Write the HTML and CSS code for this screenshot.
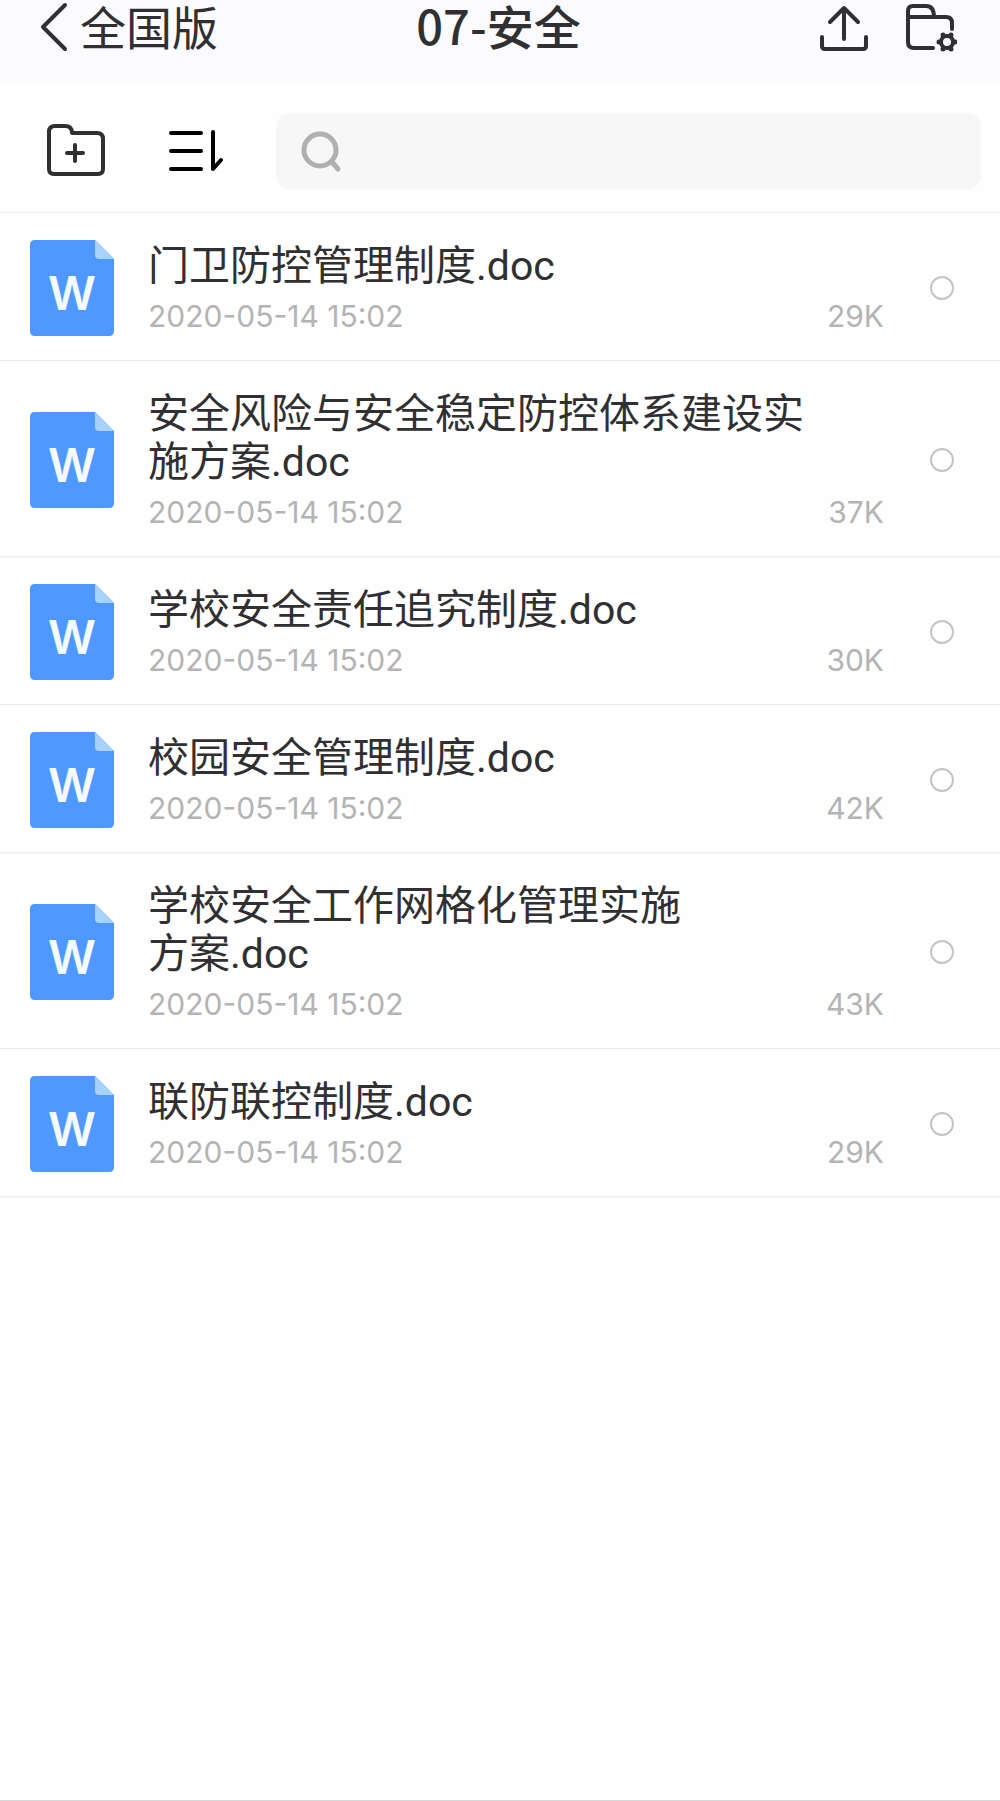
FILE: index.html
```html
<!DOCTYPE html>
<html lang="zh-CN">
<head>
  <meta charset="UTF-8" />
  <meta name="viewport" content="width=device-width, initial-scale=1.0"/>
  <title>07-安全</title>
  <link rel="stylesheet" href="styles.css">
</head>
<body>
  <header class="header">
    <a class="back" href="#">
      <svg width="28" height="50" viewBox="0 0 28 50"><path d="M25 3L3 25l22 22"/></svg>
      <span>全国版</span>
    </a>
    <h1>07-安全</h1>
    <div class="actions">
      <button type="button" aria-label="上传">
        <svg width="50" height="48" viewBox="0 0 50 48"><path d="M25 35V4M11 18L25 4l14 14M3 33v9q0 3 3 3h38q3 0 3-3v-9"/></svg>
      </button>
      <button type="button" aria-label="文件夹设置">
        <svg width="52" height="50" viewBox="0 0 52 50">
          <path d="M28 45H9q-6 0-6-6V8q0-5 5-5h13q8 0 8 11M3 14h38q6 0 6 6v6"/>
          <circle cx="42" cy="39" r="6"/>
          <path class="gear-teeth" d="M38 32v0M46 32v0M50 39v0M46 46v0M38 46v0M34 39v0"/>
        </svg>
      </button>
    </div>
  </header>

  <div class="toolbar">
    <button type="button" aria-label="新建文件夹">
      <svg width="60" height="54" viewBox="0 0 60 54"><path d="M3 8q0-6 6-6h10q7 0 7 7h25q6 0 6 6v30q0 5-5 5H8q-5 0-5-5zM21 29h16M29 21v16"/></svg>
    </button>
    <button type="button" class="sort" aria-label="排序">
      <svg width="56" height="44" viewBox="0 0 56 44"><path d="M3 4h30M3 22h30M3 40h30M45 3v37l8-9"/></svg>
    </button>
    <label class="search">
      <svg width="44" height="44" viewBox="0 0 44 44"><circle cx="21" cy="21" r="16"/><path d="M33 33l6 7"/></svg>
      <input type="search" aria-label="搜索">
    </label>
  </div>

  <ul class="files" id="fileList"></ul>

  <script>
    const fileList = document.getElementById("fileList");
    const files = [
      { name: "门卫防控管理制度.doc", date: "2020-05-14 15:02", size: "29K" },
      { name: "安全风险与安全稳定防控体系建设实施方案.doc", date: "2020-05-14 15:02", size: "37K" },
      { name: "学校安全责任追究制度.doc", date: "2020-05-14 15:02", size: "30K" },
      { name: "校园安全管理制度.doc", date: "2020-05-14 15:02", size: "42K" },
      { name: "学校安全工作网格化管理实施<br>方案.doc", date: "2020-05-14 15:02", size: "43K" },
      { name: "联防联控制度.doc", date: "2020-05-14 15:02", size: "29K" }
    ];

    files.forEach((file, index) => {
      const li = document.createElement("li");
      li.className = "file";
      li.innerHTML = `
        <svg class="doc-icon" width="84" height="96" viewBox="0 0 84 96">
          <path fill="#4e98ff" d="M5 0h60l19 19v72q0 5-5 5H5q-5 0-5-5V5q0-5 5-5z"/>
          <path fill="#a5d3fb" d="M65 0l19 19H69q-4 0-4-4z"/>
          <text x="42" y="70" text-anchor="middle">W</text>
        </svg>
        <label class="info" for="file${index}">
          <span class="name">${file.name}</span>
          <span class="meta"><span>${file.date}</span><span>${file.size}</span></span>
        </label>
        <input type="radio" name="file" id="file${index}">
      `;
      fileList.appendChild(li);
    });
  </script>
</body>
</html>
```

FILE: styles.css
```css
* {
  box-sizing: border-box;
}

body {
  margin: 0;
  min-height: 100vh;
  font-family: Inter, "Noto Sans CJK SC", sans-serif;
  background: #fefefe;
  color: #303033;
  border-bottom: 1px solid #d8d8d8;
}

button {
  display: flex;
  padding: 0;
  border: none;
  background: none;
  color: inherit;
  cursor: pointer;
}

svg {
  display: block;
  flex: none;
  fill: none;
  stroke: currentColor;
  stroke-width: 4;
  stroke-linecap: round;
  stroke-linejoin: round;
}

.header {
  display: grid;
  grid-template-columns: 1fr auto 1fr;
  align-items: start;
  height: 84px;
  padding: 0 43px 0 40px;
  background: #fbfbfe;
  font-family: "Noto Sans CJK SC", sans-serif;
}

.back {
  display: flex;
  align-items: flex-start;
  gap: 12px;
  color: inherit;
  font-size: 46px;
  line-height: 50px;
  text-decoration: none;
}

.back svg {
  margin-top: 2px;
}

.header h1 {
  margin: 0;
  font-size: 47px;
  line-height: 50px;
  font-weight: 500;
}

.actions {
  display: flex;
  justify-content: flex-end;
  align-items: center;
  gap: 36px;
  padding-top: 3px;
}

.gear-teeth {
  stroke-width: 5;
}

.toolbar {
  display: flex;
  align-items: center;
  height: 129px;
  padding: 6px 19px 0 46px;
  border-bottom: 1px solid #ededed;
}

.sort {
  margin: 0 52px 0 62px;
  color: #000;
}

.search {
  display: flex;
  flex: 1;
  align-items: center;
  height: 76px;
  padding: 0 23px;
  border-radius: 14px;
  background: #f7f7f7;
  color: #b0b0b0;
}

.search svg {
  stroke-width: 5;
}

.search input {
  flex: 1;
  min-width: 0;
  border: none;
  outline: none;
  background: none;
  font-size: 36px;
}

.files {
  margin: 0;
  padding: 0;
  list-style: none;
}

.file {
  display: flex;
  align-items: center;
  padding: 29px 46px 27px 30px;
  border-bottom: 1px solid #e9e9e9;
}

.doc-icon {
  margin: -4px 0;
  stroke: none;
}

.doc-icon text {
  fill: #f4fbff;
  font-size: 47px;
  font-weight: 600;
}

.info {
  flex: 1;
  margin: 0 46px 0 34px;
}

.name {
  display: block;
  padding-right: 60px;
  font-family: Roboto, "Noto Sans CJK SC", sans-serif;
  font-size: 41px;
  line-height: 48px;
}

.meta {
  display: flex;
  justify-content: space-between;
  margin-top: 10px;
  color: #b4b4b4;
  font-size: 30px;
  line-height: 33px;
}

.file input {
  appearance: none;
  width: 24px;
  height: 24px;
  margin: 0;
  border: 2px solid #c4c4c4;
  border-radius: 50%;
}

.file input:checked {
  border: 8px solid #4e98ff;
}
```
